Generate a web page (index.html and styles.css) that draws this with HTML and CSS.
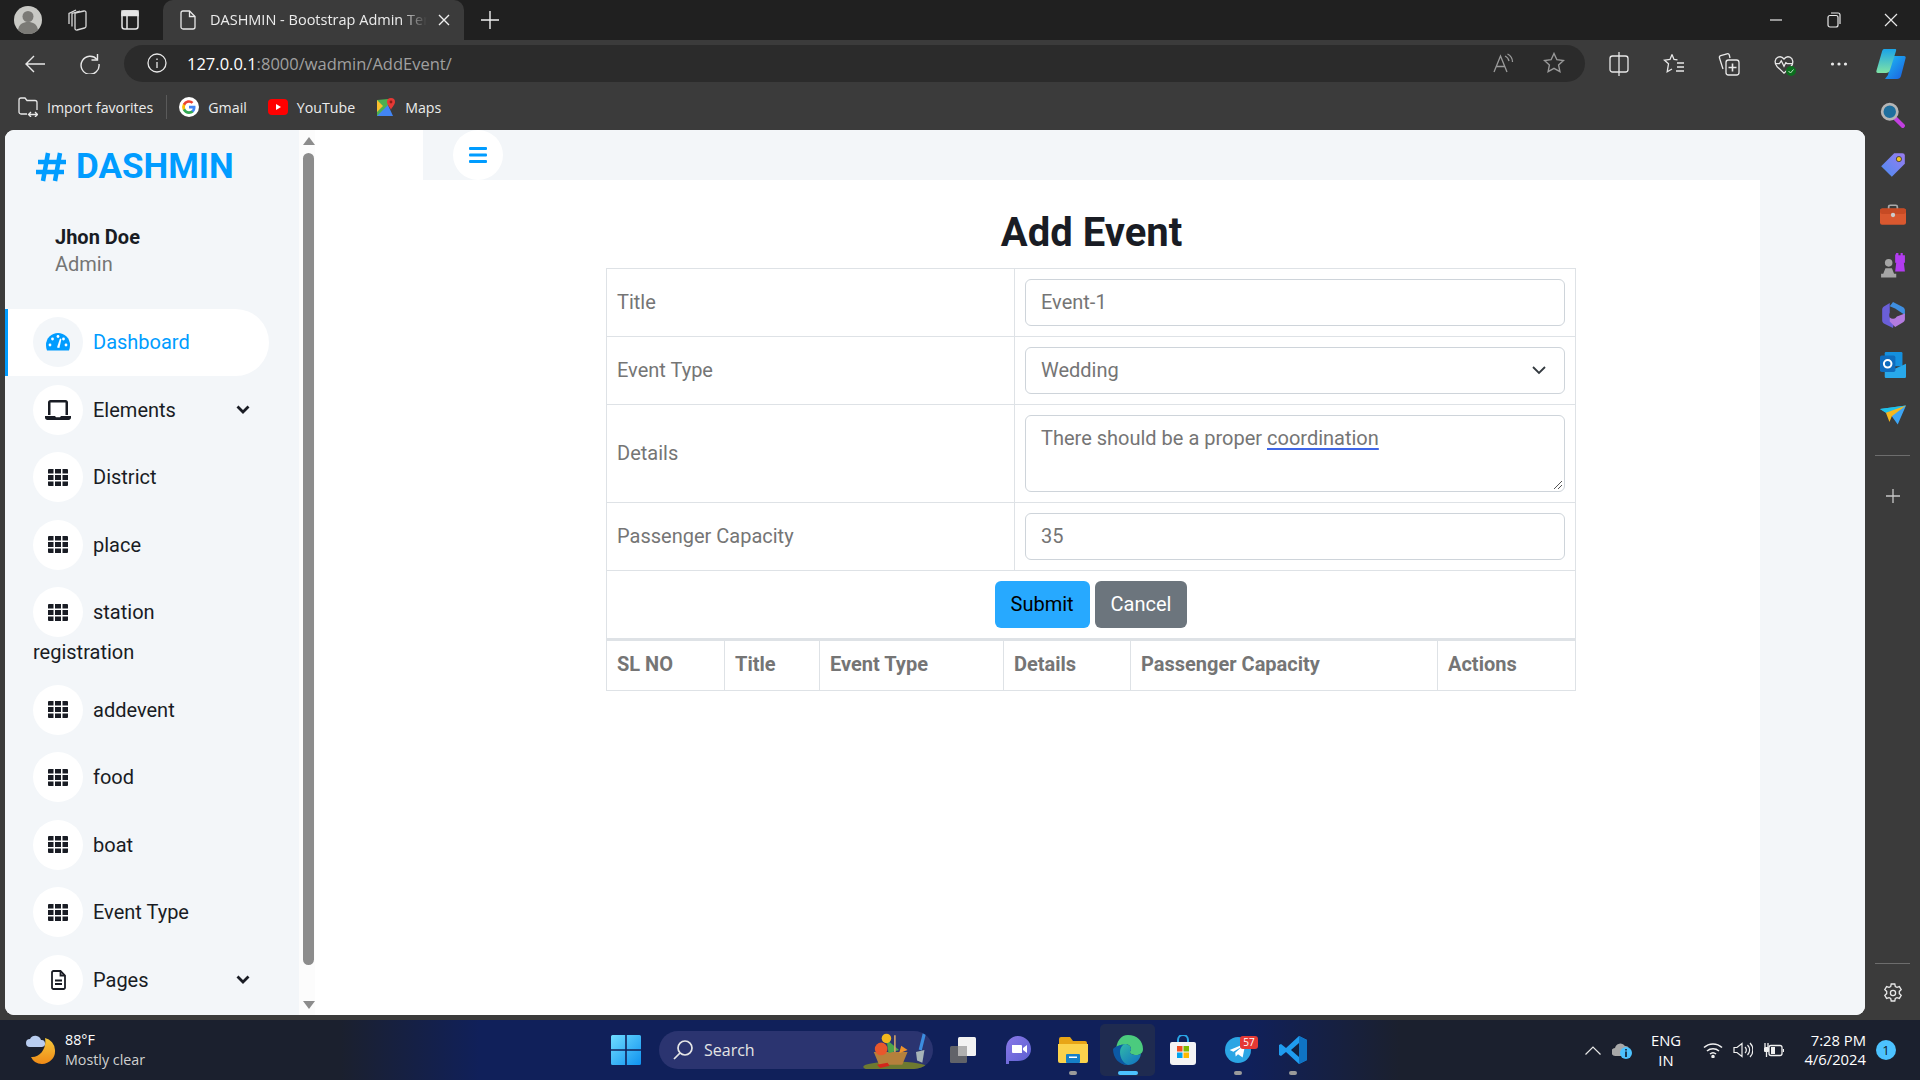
FILE: index.html
```html
<!DOCTYPE html>
<html lang="en">
<head>
<meta charset="utf-8">
<title>DASHMIN - Bootstrap Admin Template</title>
<link rel="stylesheet" href="styles.css">
</head>
<body>
<svg class="defs" width="0" height="0"><defs><symbol id="grid" viewBox="0 0 20 17"><path fill="#191c24" d="M0 1a1 1 0 0 1 1-1h4.500v4.500H0zM7 0h6v4.500H7zM14.500 0H19a1 1 0 0 1 1 1v3.500h-5.500zM0 6h5.500v5H0zM7 6h6v5H7zM14.500 6H20v5h-5.500zM0 12.500h5.500V17H1a1 1 0 0 1-1-1zM7 12.500h6V17H7zM14.500 12.500H20V16a1 1 0 0 1-1 1h-4.500z"/></symbol></defs></svg>
<header class="tabstrip">
  <span class="avatar"><svg width="28" height="28" viewBox="0 0 28 28"><circle cx="14" cy="14" r="14" fill="#c9c9c5"/><circle cx="14" cy="10.5" r="5.5" fill="#7b7a76"/><path d="M4 24c1-6 5-8 10-8s9 2 10 8a14 14 0 0 1-20 0z" fill="#7b7a76"/></svg></span>
  <span class="strip-icon first"><svg width="22" height="24" viewBox="0 0 22 24" fill="none" stroke="#d8d8d8" stroke-width="1.3"><path d="M9 5l9-2c1-.2 2 .6 2 1.600v13.600c0 1-.6 1.600-1.500 1.800L11 22c-1 .2-2-.5-2-1.600z"/><path d="M6 18.500V5.500l8-2.500M3 16V5.500L10 2"/></svg></span>
  <span class="strip-icon"><svg width="18" height="20" viewBox="0 0 18 20" fill="none" stroke="#e6e6e6" stroke-width="1.5"><rect x="1" y="1" width="16" height="18" rx="2.500"/><path d="M6 5.500V19"/><rect x="1" y="1" width="16" height="4.500" fill="#e6e6e6"/></svg></span>
  <div class="tab">
    <svg class="tab-doc" width="16" height="20" viewBox="0 0 16 20" fill="none" stroke="#e8e8e8" stroke-width="1.3"><path d="M3 1h6.500L15 6.500V17a2 2 0 0 1-2 2H3a2 2 0 0 1-2-2V3a2 2 0 0 1 2-2z"/><path d="M9.500 1v5.500H15"/></svg>
    <span class="tab-title">DASHMIN - Bootstrap Admin Template</span>
    <svg class="tab-close" width="12" height="12" viewBox="0 0 12 12" stroke="#f0f0f0" stroke-width="1.4"><path d="M1 1l10 10M11 1L1 11"/></svg>
  </div>
  <svg class="tab-new" width="18" height="18" viewBox="0 0 18 18" stroke="#f0f0f0" stroke-width="1.4"><path d="M9 0v18M0 9h18"/></svg>
  <div class="window-controls">
    <svg width="14" height="14" viewBox="0 0 14 14" stroke="#e8e8e8" stroke-width="1.2"><path d="M1 7h12"/></svg>
    <svg width="14" height="16" viewBox="0 0 14 16" fill="none" stroke="#e8e8e8" stroke-width="1.2"><rect x="1" y="3.500" width="10" height="11.500" rx="2"/><path d="M4 1h7a2 2 0 0 1 2 2v9"/></svg>
    <svg width="14" height="14" viewBox="0 0 14 14" stroke="#e8e8e8" stroke-width="1.2"><path d="M1 1l12 12M13 1L1 13"/></svg>
  </div>
</header>

<div class="toolbar">
  <svg class="tool-nav back" width="20" height="18" viewBox="0 0 20 18" fill="none" stroke="#e8e8e8" stroke-width="1.4"><path d="M20 9H1M9 1L1 9l8 8"/></svg>
  <svg class="tool-nav reload" width="20" height="20" viewBox="0 0 20 20" fill="none" stroke="#e8e8e8" stroke-width="1.4"><path d="M17 5.500A9 9 0 1 0 19 10"/><path d="M17.500 0v6h-6"/></svg>
  <div class="addressbar">
    <svg class="info" width="20" height="20" viewBox="0 0 20 20" fill="none" stroke="#e8e8e8" stroke-width="1.3"><circle cx="10" cy="10" r="9"/><path d="M10 9v6M10 5.500v1.500"/></svg>
    <span class="url"><span class="url-host">127.0.0.1</span>:8000/wadmin/AddEvent/</span>
    <svg class="read" width="24" height="20" viewBox="0 0 24 20" fill="none" stroke="#9a9a9a" stroke-width="1.3"><path d="M2 19L8.500 3 15 19M4.500 13.500h8"/><path d="M13 3a7 7 0 0 1 4 5M15.500 1a9 9 0 0 1 5 8"/></svg>
    <svg class="star" width="22" height="22" viewBox="0 0 22 22" fill="none" stroke="#9a9a9a" stroke-width="1.4"><path d="M11 1.500l2.900 6.200 6.600.8-4.900 4.600 1.300 6.600L11 16.400l-5.900 3.300 1.300-6.600L1.500 8.500l6.600-.8z"/></svg>
  </div>
  <div class="tool-actions">
    <svg width="20" height="24" viewBox="0 0 20 24" fill="none" stroke="#e8e8e8" stroke-width="1.3"><rect x="1" y="4" width="18" height="16" rx="2.500"/><path d="M10 0v24"/></svg>
    <svg width="22" height="22" viewBox="0 0 22 22" fill="none" stroke="#e8e8e8" stroke-width="1.3"><path d="M9 1.500l2 5 3.500.4M9 1.500l-2 5-5.500.7 4 3.600-1.300 8 4.800-2.800"/><path d="M14 10h7M14 14h7M13 18h8"/></svg>
    <svg width="22" height="24" viewBox="0 0 22 24" fill="none" stroke="#e8e8e8" stroke-width="1.3"><path d="M5 17L1.500 6c-.3-1 .2-2 1.200-2.300L9 1.800c1-.3 2 .2 2.300 1.200L12 6"/><rect x="8" y="8" width="13" height="15" rx="2.500"/><path d="M14.500 11.500v8M10.500 15.500h8" stroke-width="1.600"/></svg>
    <span class="heart"><svg width="20" height="20" viewBox="0 0 22 22" fill="none" stroke="#e8e8e8" stroke-width="1.4"><path d="M3.500 14C0 10 .8 5 4.500 3.500 7 2.500 9.500 3.500 11 5.500c1.500-2 4-3 6.500-2C21 5 22 10 18.500 14L11 21z"/><path d="M1 10.500h5l2-3 3 6 2-4 1.500 1H21"/></svg><svg class="heart-ok" width="10" height="10" viewBox="0 0 10 10"><circle cx="5" cy="5" r="5" fill="#0b6e1e"/><path d="M2.500 5l2 2 3-3.500" fill="none" stroke="#bfe8c5" stroke-width="1"/></svg></span>
    <svg width="18" height="6" viewBox="0 0 18 6" fill="#e8e8e8"><circle cx="2.500" cy="3" r="1.600"/><circle cx="9" cy="3" r="1.600"/><circle cx="15.500" cy="3" r="1.600"/></svg>
  </div>
  <svg class="copilot" width="30" height="32" viewBox="0 0 30 32"><defs><linearGradient id="cpa" x1="0" y1="0" x2="0" y2="1"><stop offset="0" stop-color="#1aa4e8"/><stop offset="1" stop-color="#7fe3a5"/></linearGradient><linearGradient id="cpb" x1="0" y1="0" x2="1" y2="1"><stop offset="0" stop-color="#1cc0f5"/><stop offset="1" stop-color="#1b5ce0"/></linearGradient></defs><path d="M18 8h10c1.500 0 2 1 1.500 2.500L25 28c-.5 2-2 3-4 3H9l3-4 4-16c.3-1.500 1-3 2-3z" fill="url(#cpb)"/><path d="M8 1h11c1 0 1.500 .5 1 2l-6 19c-.6 1.800-2 3-4 3H2c-1.500 0-2-1-1.500-2.500L6 3.500C6.500 2 7 1 8 1z" fill="url(#cpa)"/></svg>
</div>

<nav class="bookmarks">
  <span class="bookmark import"><svg width="20" height="20" viewBox="0 0 20 20" fill="none" stroke="#e8e8e8" stroke-width="1.3"><path d="M9 17H3a2 2 0 0 1-2-2V3a2 2 0 0 1 2-2h4l2 2.500h8a2 2 0 0 1 2 2V13"/><path d="M11 17.500h8M13 15l-2.500 2.500L13 20M17 15l2.500 2.500L17 20"/></svg>Import favorites</span>
  <span class="bm-sep"></span>
  <span class="bookmark"><svg width="20" height="20" viewBox="0 0 20 20"><circle cx="10" cy="10" r="10" fill="#fff"/><path d="M16.500 10.200c0-.5 0-1-.1-1.400H10v2.700h3.700a3.200 3.200 0 0 1-1.400 2.100v1.700h2.200c1.300-1.200 2-3 2-5.100z" fill="#4285f4"/><path d="M10 17c1.900 0 3.400-.6 4.500-1.700l-2.200-1.700c-.6.400-1.400.7-2.300.7-1.800 0-3.300-1.200-3.800-2.800H3.900v1.800A6.900 6.900 0 0 0 10 17z" fill="#34a853"/><path d="M6.200 11.500a4.100 4.100 0 0 1 0-2.900V6.800H3.900a6.900 6.900 0 0 0 0 6.400z" fill="#fbbc05"/><path d="M10 5.800c1 0 1.900.3 2.600 1l1.900-1.900A6.900 6.900 0 0 0 3.900 6.800l2.300 1.800C6.700 7 8.200 5.800 10 5.800z" fill="#ea4335"/></svg>Gmail</span>
  <span class="bookmark"><svg width="20" height="16" viewBox="0 0 20 16"><rect width="20" height="16" rx="4" fill="#f00"/><path d="M8 5l5 3-5 3z" fill="#fff"/></svg>YouTube</span>
  <span class="bookmark"><svg width="20" height="20" viewBox="0 0 20 20"><path d="M1 3l11-1v17H1z" fill="#4caf50"/><path d="M1 19L12 8l5 11z" fill="#4285f4"/><path d="M1 3l6 6-6 6z" fill="#fbc02d"/><path d="M15 1a4 4 0 0 1 4 4c0 3-4 6-4 8-.2-2-4-5-4-8a4 4 0 0 1 4-4z" fill="#e53935"/><circle cx="15" cy="5" r="1.400" fill="#8e1c18"/></svg>Maps</span>
</nav>

<div class="browser-body">
  <div class="viewport">
    <aside class="sidebar">
      <div class="brand"><svg class="brand-hash" width="30" height="30" viewBox="0 0 30 30" fill="none" stroke="#009cff" stroke-width="4.500"><path d="M12 1L7 29M24 1l-5 28M2 10h28M0 20h28"/></svg><span>DASHMIN</span></div>
      <div class="user"><div class="user-name">Jhon Doe</div><div class="user-role">Admin</div></div>
      <ul class="menu">
        <li class="menu-link active"><span class="circle"><svg width="24" height="18" viewBox="0 0 24 18" fill="#009cff"><path d="M12 0A12 12 0 0 0 0 12c0 2 .4 3.900 1 5.500h22c.6-1.600 1-3.500 1-5.500A12 12 0 0 0 12 0z"/><g fill="#fff"><circle cx="4" cy="12" r="1.400"/><circle cx="6.500" cy="6" r="1.400"/><circle cx="12" cy="3.500" r="1.400"/><circle cx="20" cy="12" r="1.400"/><circle cx="17.500" cy="6" r="1.400"/><path d="M11 14.500L14 5.500l1.400.4-2 9.100z"/></g></svg></span><span>Dashboard</span></li>
        <li class="menu-link"><span class="circle"><svg width="26" height="20" viewBox="0 0 26 20"><path d="M3 2.500C3 1.200 4 0 5.500 0h15C22 0 23 1.200 23 2.500V15h-2.500V2.500h-15V15H3z" fill="#191c24"/><path d="M0 16h10l1 1.200h4l1-1.200h10v1.500c0 1.300-1 2.500-2.500 2.500h-21C1 20 0 18.800 0 17.500z" fill="#191c24"/></svg></span><span>Elements</span><svg class="chevron" width="14" height="9" viewBox="0 0 14 9" fill="none" stroke="#191c24" stroke-width="2.800"><path d="M1.500 1.500L7 7l5.500-5.500"/></svg></li>
        <li class="menu-link"><span class="circle"><svg width="20" height="17"><use href="#grid"/></svg></span><span>District</span></li>
        <li class="menu-link"><span class="circle"><svg width="20" height="17"><use href="#grid"/></svg></span><span>place</span></li>
        <li class="menu-link"><span class="circle"><svg width="20" height="17"><use href="#grid"/></svg></span><span class="word">station</span> <span class="word">registration</span></li>
        <li class="menu-link"><span class="circle"><svg width="20" height="17"><use href="#grid"/></svg></span><span>addevent</span></li>
        <li class="menu-link"><span class="circle"><svg width="20" height="17"><use href="#grid"/></svg></span><span>food</span></li>
        <li class="menu-link"><span class="circle"><svg width="20" height="17"><use href="#grid"/></svg></span><span>boat</span></li>
        <li class="menu-link"><span class="circle"><svg width="20" height="17"><use href="#grid"/></svg></span><span>Event Type</span></li>
        <li class="menu-link"><span class="circle"><svg width="15" height="20" viewBox="0 0 15 20" fill="none" stroke="#191c24" stroke-width="1.800"><path d="M2.500 1H9.500L14 5.500V17.500a1.500 1.500 0 0 1-1.500 1.500h-10A1.500 1.500 0 0 1 1 17.500v-15A1.500 1.500 0 0 1 2.500 1z"/><path d="M9.500 1v4.500H14M4 10.500h7M4 14h7"/></svg></span><span>Pages</span><svg class="chevron" width="14" height="9" viewBox="0 0 14 9" fill="none" stroke="#191c24" stroke-width="2.800"><path d="M1.500 1.500L7 7l5.500-5.500"/></svg></li>
      </ul>
    </aside>
    <div class="scrollbar">
      <svg width="12" height="8" viewBox="0 0 12 8" fill="#8c8c8c"><path d="M6 0l6 8H0z"/></svg>
      <span class="thumb"></span>
      <svg width="12" height="8" viewBox="0 0 12 8" fill="#8c8c8c"><path d="M6 8L0 0h12z"/></svg>
    </div>
    <main class="main">
      <div class="gutter"></div>
      <div class="page">
        <div class="topbar"><span class="menu-btn"><svg width="18" height="16" viewBox="0 0 18 16" fill="#009cff"><rect width="18" height="3" rx="1"/><rect y="6.500" width="18" height="3" rx="1"/><rect y="13" width="18" height="3" rx="1"/></svg></span></div>
        <div class="content">
          <h1 class="title">Add Event</h1>
          <table class="form-table">
            <tr><td class="label-cell">Title</td><td><div class="control">Event-1</div></td></tr>
            <tr><td class="label-cell">Event Type</td><td><div class="control select">Wedding<svg width="14" height="9" viewBox="0 0 14 9" fill="none" stroke="#343a40" stroke-width="1.800"><path d="M1 1l6 6 6-6"/></svg></div></td></tr>
            <tr><td class="label-cell">Details</td><td><div class="control textarea">There should be a proper <span class="spell">coordination</span><svg class="grip" width="10" height="10" viewBox="0 0 10 10" stroke="#555" stroke-width="1"><path d="M1 9l8-8M5 9l4-4"/></svg></div></td></tr>
            <tr><td class="label-cell">Passenger Capacity</td><td><div class="control">35</div></td></tr>
            <tr><td colspan="2" class="actions"><div class="actions-row"><button class="btn btn-submit" type="button">Submit</button><button class="btn btn-cancel" type="button">Cancel</button></div></td></tr>
          </table>
          <table class="list-table">
            <tr><th class="c1">SL NO</th><th class="c2">Title</th><th class="c3">Event Type</th><th class="c4">Details</th><th class="c5">Passenger Capacity</th><th>Actions</th></tr>
          </table>
        </div>
      </div>
      <div class="gutter-right"></div>
    </main>
  </div>
  <aside class="edge-rail">
    <svg class="rail-icon" width="24" height="24" viewBox="0 0 24 24"><path d="M14 15l7 7" stroke="#c23fe0" stroke-width="4" stroke-linecap="round"/><circle cx="9" cy="9" r="7" fill="#1f6f9e" stroke="#b5b5b5" stroke-width="2.500"/></svg>
    <svg class="rail-icon" width="22" height="22" viewBox="0 0 22 22"><defs><linearGradient id="tg" x1="0" y1="1" x2="1" y2="0"><stop offset="0" stop-color="#4a8cf0"/><stop offset="1" stop-color="#9a7cf0"/></linearGradient></defs><path d="M12 1h7a2 2 0 0 1 2 2v7L10 21 1 12z" fill="url(#tg)"/><circle cx="16" cy="6" r="2.200" fill="#f3c423" stroke="#333" stroke-width=".7"/></svg>
    <svg class="rail-icon" width="24" height="20" viewBox="0 0 24 20"><path d="M8 5V2.500A1.500 1.500 0 0 1 9.500 1h5A1.500 1.500 0 0 1 16 2.500V5" fill="none" stroke="#aaa" stroke-width="1.600"/><rect y="4" width="24" height="15" rx="2" fill="#d9582f"/><rect y="4" width="24" height="5" rx="2" fill="#c64a24"/><circle cx="12" cy="10" r="2" fill="#ccc"/></svg>
    <svg class="rail-icon" width="24" height="24" viewBox="0 0 24 24"><path d="M15 1h2v2h2V1h2v2h2V1v9h-1l1 8H14l1-8h-1V3z" fill="#b23cf0"/><circle cx="8" cy="10" r="3.500" fill="#a5a5a5"/><path d="M5 15h6l2 5H3zM1 20h14v3.500H1z" fill="#a5a5a5"/></svg>
    <svg class="rail-icon" width="22" height="24" viewBox="0 0 22 24"><path d="M11 0l9 4.500c1 .5 2 1.500 2 3V12l-9-6-5-2z" fill="#3f8fe0"/><path d="M1 7c0-1.500 1-2.500 2-3l5-3v14l4 3-1 6-8-4c-1-.5-2-1.500-2-3z" fill="#6a5fd8"/><path d="M8 10l6 3.500 8-3V16c0 1.500-1 2.500-2 3l-7 4-5-5z" fill="#b47be0"/><circle cx="11" cy="12" r="3.500" fill="#3b3b3b"/></svg>
    <svg class="rail-icon" width="22" height="22" viewBox="0 0 22 22"><rect x="4" y="0" width="15" height="12" rx="1" fill="#1490df"/><path d="M4 10l9 4 9-4v11a1 1 0 0 1-1 1H5a1 1 0 0 1-1-1z" fill="#28a8ea"/><rect y="3" width="13" height="14" rx="1.500" fill="#0f6cbd"/><circle cx="6.500" cy="10" r="3.200" fill="none" stroke="#fff" stroke-width="1.700"/></svg>
    <svg class="rail-icon" width="22" height="16" viewBox="0 0 22 16"><path d="M0 3l22-3-7 16-5-7z" fill="#3da5f4"/><path d="M0 3l22-3-17 6z" fill="#1dc3e8"/><path d="M5 6l3 8 2-5 12-9z" fill="#f5b81f"/></svg>
    <span class="rail-sep"></span>
    <svg class="rail-plus" width="14" height="14" viewBox="0 0 14 14" stroke="#c8c8c8" stroke-width="1.300"><path d="M7 0v14M0 7h14"/></svg>
    <span class="rail-sep bottom"></span>
    <svg class="rail-gear" width="20" height="20" viewBox="0 0 20 20" fill="none" stroke="#e8e8e8" stroke-width="1.300"><path d="M8.200 1h3.600l.5 2.500 1.700.9 2.400-.8 1.800 3.100-1.900 1.700v2.200l1.900 1.700-1.800 3.100-2.400-.8-1.700.9-.5 2.500H8.200l-.5-2.500-1.700-.9-2.400.8-1.800-3.100 1.900-1.700V8.400L1.800 6.700l1.800-3.100 2.400.8 1.700-.9z"/><circle cx="10" cy="10" r="2.600"/></svg>
  </aside>
</div>

<footer class="taskbar">
  <div class="weather">
    <svg width="30" height="30" viewBox="0 0 30 30"><defs><linearGradient id="mg" x1="0" y1="0" x2="0" y2="1"><stop offset="0" stop-color="#f5c83c"/><stop offset="1" stop-color="#f08a16"/></linearGradient></defs><path d="M19 3a13 13 0 0 1 10 12 13 13 0 0 1-13 14A12 12 0 0 1 5 22c9 1 16-9 14-19z" fill="url(#mg)"/><path d="M4 12a4 4 0 0 1 0-8 6 6 0 0 1 11 1 3.500 3.500 0 0 1 1 7z" fill="#b9cdf0"/></svg>
    <div class="weather-text"><div class="temp">88°F</div><div class="cond">Mostly clear</div></div>
  </div>
  <div class="task-center">
    <svg class="start" width="30" height="30" viewBox="0 0 30 30"><defs><linearGradient id="wg" x1="0" y1="0" x2="1" y2="1"><stop offset="0" stop-color="#6fdcff"/><stop offset="1" stop-color="#0f92f0"/></linearGradient></defs><path d="M0 1.500A1.500 1.500 0 0 1 1.500 0h12.700v14.200H0zM15.800 0h12.700A1.500 1.500 0 0 1 30 1.500v12.700H15.800zM0 15.800h14.200V30H1.500A1.500 1.500 0 0 1 0 28.500zM15.800 15.800H30v12.700a1.500 1.500 0 0 1-1.500 1.500H15.800z" fill="url(#wg)"/></svg>
    <div class="search">
      <svg width="22" height="22" viewBox="0 0 22 22" fill="none" stroke="#e6e6e6" stroke-width="1.700"><circle cx="13" cy="9" r="7"/><path d="M8 14l-6 6"/></svg>
      <span>Search</span>
      <svg class="search-art" width="72" height="38" viewBox="0 0 64 36"><ellipse cx="30" cy="34" rx="30" ry="5" fill="#6e7a30"/><path d="M10 20h32l-5 12H15z" fill="#b5803c"/><circle cx="17" cy="17" r="6" fill="#e8572c"/><path d="M22 8l12 10-10 3z" fill="#4da64a"/><circle cx="22" cy="7" r="4.500" fill="#f2b81e"/><path d="M30 4v16" stroke="#d2a36a" stroke-width="1.500"/><path d="M36 14l6 4-8 3z" fill="#f0922b"/><path d="M13 32l10-2 2 3-9 2z" fill="#d3261c"/><path d="M58 2l-4 16" stroke="#3c8de0" stroke-width="3"/><path d="M50 20l8-2-2 12-5-2z" fill="#a8b4b8"/></svg>
    </div>
    <div class="task-apps">
      <span class="app"><svg width="28" height="28" viewBox="0 0 28 28"><rect x="9" y="1" width="18" height="19" rx="1.500" fill="#f2f2f2"/><rect x="1" y="10" width="17" height="17" rx="1.500" fill="#6a6a6a" opacity=".9"/><rect x="9" y="10" width="9" height="10" fill="#b0b0b0"/></svg></span>
      <span class="app"><svg width="26" height="28" viewBox="0 0 26 28"><defs><linearGradient id="tm" x1="0" y1="0" x2="1" y2="1"><stop offset="0" stop-color="#8a78e8"/><stop offset="1" stop-color="#5a5fd0"/></linearGradient></defs><path d="M13 0c7 0 13 5.500 13 13s-6 12-13 12H4v3H1V13C1 5.500 6 0 13 0z" fill="url(#tm)"/><path d="M7 9h9a1 1 0 0 1 1 1v7H8a1 1 0 0 1-1-1zM18 12l4-3v8l-4-3z" fill="#fff"/></svg></span>
      <span class="app dotted"><svg width="30" height="26" viewBox="0 0 30 26"><path d="M1 2a2 2 0 0 1 2-2h9l3 4h12a2 2 0 0 1 2 2v5H1z" fill="#e8a516"/><path d="M0 7h30v17a2 2 0 0 1-2 2H2a2 2 0 0 1-2-2z" fill="#fbd24c"/><rect x="8" y="17" width="14" height="9" rx="1" fill="#1680c8"/><rect x="11" y="19.500" width="8" height="1.500" fill="#fff"/></svg></span>
      <span class="app active"><svg width="30" height="30" viewBox="0 0 30 30"><defs><linearGradient id="ed" x1="0" y1="0" x2="1" y2="1"><stop offset="0" stop-color="#35c1a4"/><stop offset="1" stop-color="#0f6fc4"/></linearGradient></defs><path d="M15 0c9 0 15 6 15 14 0 4-3 6-7 6-3 0-6-1-6-3 0-1 1-1.500 1-3 0-3-3-5-6-5-5 0-9 4-9 8C3 6 8 0 15 0z" fill="#4bcb7e"/><path d="M3 17c0-4 4-8 9-8 3 0 6 2 6 5 0 1.500-1 2-1 3 0 2 3 3 6 3 2 0 3.500-.5 5-1.500C27 26 21 30 15 30 8 30 3 24 3 17z" fill="url(#ed)"/><path d="M0 14c0 9 6 16 15 16-5-2-8-7-8-13 0-3 1-5 3-7-5 0-8 2-10 4z" fill="#0c59a4"/></svg></span>
      <span class="app"><svg width="26" height="30" viewBox="0 0 26 30"><path d="M8 7V5a5 5 0 0 1 10 0v2" fill="none" stroke="#2aa7e8" stroke-width="2"/><path d="M2 7h22a2 2 0 0 1 2 2v18a3 3 0 0 1-3 3H3a3 3 0 0 1-3-3V9a2 2 0 0 1 2-2z" fill="#f4f4f4"/><rect x="7" y="11" width="5.500" height="5.500" fill="#f25022"/><rect x="13.500" y="11" width="5.500" height="5.500" fill="#7fba00"/><rect x="7" y="17.500" width="5.500" height="5.500" fill="#00a4ef"/><rect x="13.500" y="17.500" width="5.500" height="5.500" fill="#ffb900"/></svg></span>
      <span class="app dotted tele"><svg width="26" height="26" viewBox="0 0 28 28"><circle cx="14" cy="14" r="14" fill="#2ba5e4"/><path d="M5 14l17-7-3 15-5-3.500-2.500 2.500-.5-4 7-6.500-9 5.500z" fill="#fff"/></svg><span class="tele-badge">57</span></span>
      <span class="app dotted"><svg width="28" height="28" viewBox="0 0 28 28"><path d="M20 0l8 4v20l-8 4L7 16l-5 4-2-1V9l2-1 5 4z" fill="#1f9cf0"/><path d="M20 0v28l8-4V4z" fill="#0f73c4"/><path d="M20 7l-8 7 8 7z" fill="#12203f"/></svg></span>
    </div>
  </div>
  <div class="tray">
    <svg width="16" height="9" viewBox="0 0 16 9" fill="none" stroke="#e8e8e8" stroke-width="1.200"><path d="M.5 8.500L8 1l7.500 7.500"/></svg>
    <span class="tray-cloud"><svg width="20" height="18" viewBox="0 0 20 18"><path d="M4 15a4 4 0 0 1-1-8 5.500 5.500 0 0 1 10-2 4 4 0 0 1 3 7v3z" fill="#a8a8a8"/><circle cx="14" cy="12" r="6" fill="#4cc2ff"/><path d="M13.200 10.500h1.600V16h-1.600zM13.200 8h1.600v1.500h-1.600z" fill="#10182a"/></svg></span>
    <div class="lang">ENG<br>IN</div>
    <svg class="wifi" width="20" height="16" viewBox="0 0 20 16" fill="none" stroke="#f0f0f0" stroke-width="1.500"><path d="M1 5.500a13 13 0 0 1 18 0M4 9a9 9 0 0 1 12 0M7 12a4.500 4.500 0 0 1 6 0"/><circle cx="10" cy="14.500" r="1" fill="#f0f0f0"/></svg>
    <svg class="vol" width="20" height="16" viewBox="0 0 20 16" fill="none" stroke="#f0f0f0" stroke-width="1.200"><path d="M1 5.500h3L9 1.500v13l-5-4H1z"/><path d="M12 5a4 4 0 0 1 0 6M14.500 3a7 7 0 0 1 0 10M17 1a10 10 0 0 1 0 14"/></svg>
    <svg class="batt" width="20" height="16" viewBox="0 0 20 16" fill="none" stroke="#f0f0f0" stroke-width="1.300"><rect x="5" y="3.500" width="13" height="10" rx="2"/><path d="M19.500 7v3"/><rect x="0" y="5" width="5" height="5" rx="1" fill="#f0f0f0" stroke="none"/><path d="M1 1v4M4 1v4M2.500 10v5"/><path d="M7 5h4v7H7z" fill="#f0f0f0" stroke="none"/></svg>
    <div class="clock"><div>7:28 PM</div><div>4/6/2024</div></div>
    <span class="notify">1</span>
  </div>
</footer>
</body>
</html>
```
FILE: styles.css
```css
* { box-sizing: border-box; }
html, body { margin: 0; padding: 0; }
body {
  width: 1920px;
  height: 1080px;
  overflow: hidden;
  background: #3b3b3b;
  display: flex;
  flex-direction: column;
  font-family: Roboto, "Liberation Sans", sans-serif;
}
svg { display: block; flex: none; }
.defs { position: absolute; }

/* tab strip */
.tabstrip { height: 40px; background: #202020; display: flex; align-items: center; padding-left: 14px; flex: none; }
.avatar { width: 28px; height: 28px; }
.strip-icon { display: flex; margin-left: 24px; width: 22px; justify-content: center; }
.strip-icon.first { margin-left: 24px; }
.strip-icon + .strip-icon { margin-left: 31px; }
.tab {
  height: 40px; width: 301px; margin-left: 22px;
  background: #3b3b3b; border-radius: 10px 10px 0 0;
  display: flex; align-items: center; padding: 0 14px 0 17px;
  color: #ececec; font: 14.500px "Open Sans", sans-serif;
}
.tab-title {
  flex: 1; margin-left: 14px; padding-bottom: 1px; white-space: nowrap; overflow: hidden;
  -webkit-mask-image: linear-gradient(90deg, #000 88%, transparent 100%);
  mask-image: linear-gradient(90deg, #000 88%, transparent 100%);
}
.tab-close { margin-left: 11px; }
.tab-new { margin-left: 17px; }
.window-controls { margin-left: auto; display: flex; align-items: center; gap: 43.500px; padding-right: 22px; }

/* toolbar */
.toolbar { height: 48px; display: flex; align-items: center; flex: none; padding-left: 25px; }
.tool-nav.reload { margin-left: 35px; }
.addressbar {
  margin-left: 24px; width: 1461px; height: 37px; margin-top: -2px;
  background: #2b2b2b; border-radius: 19px;
  display: flex; align-items: center; padding-left: 23px;
}
.url { margin-left: 20px; font: 16.500px "Open Sans", sans-serif; color: #a0a0a0; white-space: nowrap; }
.url-host { color: #fff; }
.read { margin-left: auto; }
.star { margin-left: 27px; margin-right: 20px; }
.tool-actions { display: flex; align-items: center; gap: 31px; margin-left: 22px; }
.tool-actions > * { width: 24px; }
.heart { position: relative; display: flex; justify-content: center; }
.heart-ok { position: absolute; right: 0; bottom: -2px; }
.copilot { margin-left: 25px; }

/* bookmarks */
.bookmarks { height: 42px; display: flex; align-items: center; padding: 0 0 4px 18px; flex: none; color: #ececec; font: 14.200px "Open Sans", sans-serif; }
.bookmark { display: flex; align-items: center; gap: 9px; margin-right: 21px; white-space: nowrap; }
.bookmark.import { margin-right: 13px; }
.bm-sep { width: 1px; height: 24px; background: #5a5a5a; margin-right: 12px; }

/* browser body */
.browser-body { flex: 1; display: flex; min-height: 0; padding: 0 0 5px 5px; }
.viewport {
  width: 1860px; height: 885px; display: flex; overflow: hidden;
  border-radius: 9px; background: #fff;
}

/* sidebar */
.sidebar { width: 294px; background: #f3f6f9; flex: none; overflow: hidden; }
.brand { display: flex; align-items: center; gap: 10px; padding: 19px 0 0 31px; height: 54px; color: #009cff; font-size: 35px; font-weight: 700; line-height: 40px; }
.user { padding: 39.500px 0 0 50px; font-size: 20px; }
.user-name { color: #191c24; font-weight: 700; line-height: 27px; }
.user-role { color: #757575; line-height: 26px; }
.menu { list-style: none; margin: 32px 0 0; padding: 0; }
.menu-link {
  width: 264px; padding: 8.750px 25px 8.750px 28px;
  color: #191c24; font-size: 20px; line-height: 30px;
  display: flex; flex-wrap: wrap; align-items: center;
}
.menu-link.active { background: #fff; color: #009cff; border-left: 3px solid #009cff; padding-left: 25px; border-radius: 0 34px 34px 0; }
.circle { display: flex; width: 50px; height: 50px; border-radius: 50%; background: #fff; align-items: center; justify-content: center; margin-right: 10px; }
.menu-link.active .circle { background: #f3f6f9; }
.chevron { margin-left: auto; margin-right: -6px; }

/* scrollbar */
.scrollbar { width: 16px; flex: none; background: #fcfcfc; display: flex; flex-direction: column; align-items: center; padding: 7px 0 6px 3px; }
.thumb { width: 11px; height: 812px; margin: 8px 0 36px; background: #8c8c8c; border-radius: 6px; }

/* main */
.main { flex: 1; display: flex; min-width: 0; }
.gutter { width: 108px; flex: none; }
.page { width: 1337px; flex: none; }
.gutter-right { flex: 1; background: #f3f6f9; }
.topbar { height: 50px; background: #f3f6f9; padding-left: 30px; }
.menu-btn { display: flex; width: 50px; height: 50px; border-radius: 50%; background: #fff; align-items: center; justify-content: center; }
.content { padding: 0 183px; }
.title { margin: 0; height: 88px; padding-top: 29px; text-align: center; font-size: 40px; line-height: 48px; font-weight: 700; color: #191c24; white-space: nowrap; }

/* tables */
table { border-collapse: collapse; width: 970px; table-layout: fixed; font-size: 20px; line-height: 30px; color: #757575; }
td, th { border: 1px solid #dee2e6; padding: 10px; }
.label-cell { width: 408px; padding: 9px 10px 11px; }
.control { height: 47px; border: 1px solid #ced4da; border-radius: 6px; padding: 6.500px 15px; background: #fff; position: relative; }
.select { display: flex; align-items: center; justify-content: space-between; padding: 0 18px 2px 15px; }
.select svg { margin-top: 2px; }
.textarea { height: 77px; }
.grip { position: absolute; right: 1px; bottom: 1px; }
.spell { text-decoration: underline solid #3f66e6 2px; text-underline-offset: 3px; }
.actions-row { display: flex; justify-content: center; gap: 5px; }
.btn { height: 47px; padding: 0 16px 2px; border: 0; border-radius: 6px; font: 20px Roboto, sans-serif; }
.btn-submit { background: #27a9ff; color: #000; }
.btn-cancel { background: #6c757d; color: #fff; }
.list-table th { text-align: left; font-weight: 700; height: 50px; border-top: 2px solid #dee2e6; padding: 8px 10px 10px; }
.c1 { width: 118px; } .c2 { width: 95px; } .c3 { width: 184px; } .c4 { width: 127px; } .c5 { width: 307px; }

/* edge rail */
.edge-rail { flex: 1; display: flex; flex-direction: column; align-items: center; margin-top: -28px; }
.rail-icon { height: 26px; margin-bottom: 24px; width: 26px; }
.rail-sep { width: 35px; height: 1px; background: #6d6d6d; margin-top: 3px; }
.rail-plus { margin-top: 33px; }
.rail-sep.bottom { margin-top: auto; }
.rail-gear { margin-top: 19px; margin-bottom: 12px; }

/* taskbar */
.taskbar {
  height: 60px; flex: none; display: flex; align-items: center;
  background: linear-gradient(90deg, #1b202e 0, #1b202e 340px, #10205a 480px, #10205a 1250px, #1b202e 1400px, #1b202e 100%);
  color: #fff; font: 14px "Open Sans", sans-serif;
}
.weather { display: flex; align-items: center; padding-left: 26px; gap: 9px; width: 610px; }
.weather-text { line-height: 20px; font-size: 14.300px; }
.cond { color: #d0d0d0; }
.task-center { display: flex; align-items: center; }
.start { margin-left: 1px; }
.search { width: 274px; height: 38px; margin-left: 18px; border-radius: 19px; background: #2b3470; display: flex; align-items: center; padding-left: 13px; gap: 10px; color: #e4e4e4; font-size: 16px; overflow: hidden; }
.search-art { margin-left: auto; }
.task-apps { display: flex; align-items: center; margin-left: 2px; }
.app { width: 55px; height: 52px; display: flex; align-items: center; justify-content: center; position: relative; }
.app.dotted::after { content: ""; position: absolute; bottom: 1px; width: 8px; height: 4px; border-radius: 2px; background: #9a9a9a; }
.app.active { background: #1f2b50; border-radius: 5px; }
.app.active::after { content: ""; position: absolute; bottom: 1px; width: 20px; height: 4px; border-radius: 2px; background: #4cc2ff; }
.tele-badge { position: absolute; right: 7px; top: 12px; width: 18px; text-align: center; background: #e53935; color: #fff; border-radius: 3px; font-size: 10px; line-height: 13px; }
.tray { margin-left: auto; display: flex; align-items: center; padding-right: 24px; }
.tray-cloud { margin-left: 11px; }
.lang { margin-left: 19px; text-align: center; line-height: 20px; font-size: 14.800px; width: 30px; }
.wifi { margin-left: 22px; }
.vol { margin-left: 10px; }
.batt { margin-left: 11px; }
.clock { margin-left: 16px; text-align: right; line-height: 19px; font-size: 14.800px; width: 66px; }
.notify { width: 20px; height: 20px; border-radius: 50%; background: #4cc2ff; color: #10182a; margin-left: 10px; text-align: center; line-height: 20px; font-size: 13px; }
```
